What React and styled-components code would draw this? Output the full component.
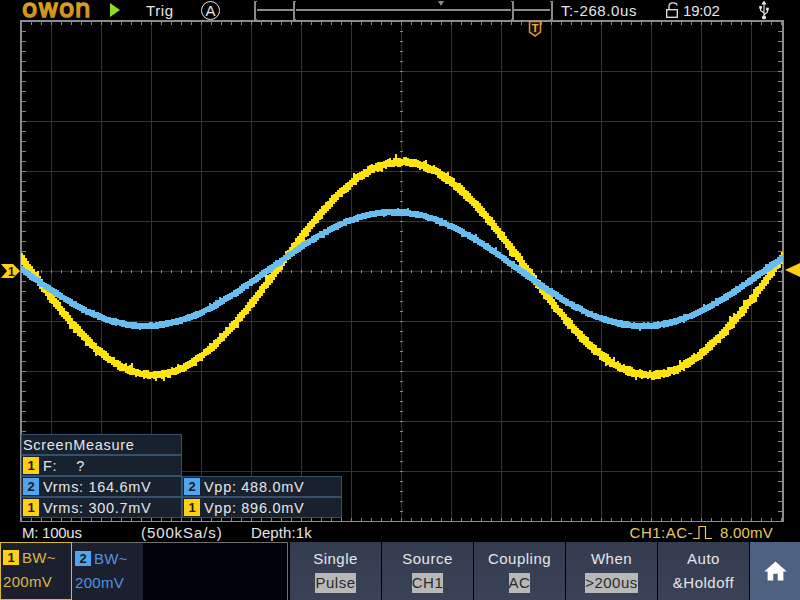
import React from 'react'
import styled, { createGlobalStyle } from 'styled-components'
import { MdHome } from 'react-icons/md'

const LEFT = 21
const RIGHT = 782
const TOP = 21
const BOTTOM = 521
const MID_X = 401
const MID_Y = 271
const PERIOD = 497

// small seeded random so the trace noise is the same on every load
const makeRandom = (seed) => () => {
  seed = (seed + 0x6d2b79f5) | 0
  let t = Math.imul(seed ^ (seed >>> 15), 1 | seed)
  t = (t + Math.imul(t ^ (t >>> 7), 61 | t)) ^ t
  return ((t ^ (t >>> 14)) >>> 0) / 4294967296
}

// one 2px column per sample, it gives the blocky look of the real screen
const tracePath = ({ center, amp, peak, width, noise, seed }) => {
  const rand = makeRandom(seed)
  const k = (2 * Math.PI) / PERIOD
  let d = ''
  for (let x = LEFT; x <= RIGHT; x += 2) {
    const y = center - amp * Math.cos(k * (x - peak))
    const slope = amp * k * Math.sin(k * (x - peak))
    const half = (width / 2) * Math.sqrt(1 + slope * slope)
    const up = rand() * noise * (rand() > 0.92 ? 2.6 : 1)
    const down = rand() * noise * (rand() > 0.92 ? 2.2 : 1)
    d += `M${x + 1} ${Math.round(y - half - up)}V${Math.round(y + half + down)}`
  }
  return d
}

const range = (from, to, step) => {
  const out = []
  for (let v = from; v <= to; v += step) out.push(v)
  return out
}

const yellowTrace = tracePath({ center: 268.5, amp: 106.5, peak: 401, width: 6, noise: 2, seed: 11 })
const blueTrace = tracePath({ center: 269, amp: 57, peak: 393, width: 5.5, noise: 1, seed: 29 })

const Grid = () => {
  const vLines = range(LEFT + 30, RIGHT - 1, 50)
  const hLines = range(TOP + 50, BOTTOM - 1, 50)
  const hTicks = range(LEFT, RIGHT, 10)
  const vTicks = range(TOP, BOTTOM, 10)
  return (
    <g shapeRendering="crispEdges">
      {vLines.map((x) => (
        <line key={x} x1={x + 0.5} x2={x + 0.5} y1={TOP} y2={BOTTOM} stroke="#333" />
      ))}
      {hLines.map((y) => (
        <line key={y} x1={LEFT} x2={RIGHT} y1={y + 0.5} y2={y + 0.5} stroke="#333" />
      ))}
      {hTicks.map((x) => (
        <g key={x} stroke="#8a8a8a">
          <line x1={x + 0.5} x2={x + 0.5} y1={TOP} y2={TOP + 4} />
          <line x1={x + 0.5} x2={x + 0.5} y1={BOTTOM - 3} y2={BOTTOM} />
          <line x1={x + 0.5} x2={x + 0.5} y1={MID_Y - 1} y2={MID_Y + 2} />
        </g>
      ))}
      {vTicks.map((y) => (
        <g key={y} stroke="#8a8a8a">
          <line x1={LEFT} x2={LEFT + 5} y1={y + 0.5} y2={y + 0.5} />
          <line x1={RIGHT - 4} x2={RIGHT} y1={y + 0.5} y2={y + 0.5} />
          <line x1={MID_X - 1} x2={MID_X + 2} y1={y + 0.5} y2={y + 0.5} />
        </g>
      ))}
      <rect x={LEFT - 0.5} y={TOP - 0.5} width={RIGHT - LEFT + 1} height={BOTTOM - TOP + 1} fill="none" stroke="#8c8c8c" strokeWidth="2" />
    </g>
  )
}

const Badge = ({ ch }) => <ChBadge $ch={ch}>{ch}</ChBadge>

const softKeys = [
  { title: 'Single', value: 'Pulse' },
  { title: 'Source', value: 'CH1' },
  { title: 'Coupling', value: 'AC' },
  { title: 'When', value: '>200us' },
  { title: 'Auto', plain: '&Holdoff' },
]

const App = () => {
  return (
    <Page>
      <Global />
      <TopBar>
        <Logo width="68" height="20" viewBox="0 0 68 20">
          <defs>
            <linearGradient id="logoGold" x1="0" x2="0" y1="0" y2="1">
              <stop offset="0" stopColor="#e8a928" />
              <stop offset="1" stopColor="#c98a14" />
            </linearGradient>
          </defs>
          <text x="1" y="17" fontFamily="DejaVu Sans" fontSize="25" fill="url(#logoGold)" stroke="url(#logoGold)" strokeWidth="1.5">owon</text>
        </Logo>
        <Play />
        <TopText $w="55px">Trig</TopText>
        <AutoMark>A</AutoMark>
        <TimeBar>
          <Bracket />
          <BarLine />
          <Bracket />
          <BarLine $grow="2">
            <BarPin />
          </BarLine>
          <Bracket $right />
          <BarLine />
          <Bracket $right />
        </TimeBar>
        <TopText $w="105px">T:-268.0us</TopText>
        <svg width="12" height="16" viewBox="0 0 12 16" fill="none" stroke="#e6e6e6" strokeWidth="1.3">
          <rect x="0.7" y="7.7" width="10.6" height="7.6" />
          <path d="M3 7.5V4C3 1.8 5 0.8 7 0.8S11 1.8 11 3.5" />
        </svg>
        <TopText $w="81px" $pad="5px" $ls="-0.2px">19:02</TopText>
        <svg width="10" height="19" viewBox="0 0 10 19" fill="none" stroke="#e6e6e6" strokeWidth="1.1">
          <path d="M5 2V17M5 12L1.5 9.5V7M5 14L8.5 11V8.5" />
          <path d="M5 0.5L6.6 3H3.4Z" fill="#e6e6e6" />
          <circle cx="5" cy="16.5" r="1.5" fill="#e6e6e6" />
          <rect x="0.8" y="5.6" width="1.6" height="1.6" fill="#e6e6e6" />
          <rect x="7.6" y="7.2" width="1.6" height="1.6" fill="#e6e6e6" />
        </svg>
      </TopBar>

      <Scope>
        <ScopeSvg viewBox="0 20 800 502">
          <Grid />
          <path d={yellowTrace} stroke="#ffe30f" strokeWidth="2" fill="none" shapeRendering="crispEdges" />
          <path d={blueTrace} stroke="#68bdf0" strokeWidth="2" fill="none" shapeRendering="crispEdges" />
          <polygon points="1,264 13,264 20,271 13,278 1,278 7,271" fill="#ffcf14" />
          <text x="8" y="276" fontFamily="Liberation Sans" fontSize="12" fontWeight="700" fill="#111">1</text>
          <polygon points="785,270 800,263 800,277" fill="#ffcf14" />
          <polygon points="529.5,21.5 540.5,21.5 540.5,32 535,36 529.5,32" fill="#1a1208" stroke="#e0962e" strokeWidth="1.5" />
          <text x="535" y="31.5" textAnchor="middle" fontFamily="Liberation Sans" fontSize="11" fontWeight="700" fill="#f0ac48">T</text>
        </ScopeSvg>

        <Measure>
          <MeasureCell $span>ScreenMeasure</MeasureCell>
          <MeasureCell $span><Badge ch="1" />F:&nbsp;&nbsp;&nbsp;&nbsp;?</MeasureCell>
          <MeasureCell><Badge ch="2" />Vrms: 164.6mV</MeasureCell>
          <MeasureCell><Badge ch="2" />Vpp: 488.0mV</MeasureCell>
          <MeasureCell><Badge ch="1" />Vrms: 300.7mV</MeasureCell>
          <MeasureCell><Badge ch="1" />Vpp: 896.0mV</MeasureCell>
        </Measure>
      </Scope>

      <StatusRow>
        <StatusText $w="119px" $ls="-0.25px">M: 100us</StatusText>
        <StatusText $w="110px" $ls="0.9px">(500kSa/s)</StatusText>
        <StatusText $ls="0.1px">Depth:1k</StatusText>
        <ChannelInfo>
          CH1:AC-
          <svg width="19" height="15" viewBox="0 0 19 15" fill="none" stroke="#e8c860" strokeWidth="1.2">
            <path d="M0 13.5H6V1.5H12.5V13.5H19" />
          </svg>
          <span>8.00mV</span>
        </ChannelInfo>
      </StatusRow>

      <SoftRow>
        <Channels>
          <ChannelTab $ch="1" $active>
            <TabTop><Badge ch="1" />BW~</TabTop>
            <span>200mV</span>
          </ChannelTab>
          <ChannelTab $ch="2">
            <TabTop><Badge ch="2" />BW~</TabTop>
            <span>200mV</span>
          </ChannelTab>
        </Channels>
        {softKeys.map((k) => (
          <SoftKey key={k.title}>
            <span>{k.title}</span>
            {k.value ? <SoftValue>{k.value}</SoftValue> : <SoftPlain>{k.plain}</SoftPlain>}
          </SoftKey>
        ))}
        <HomeKey><MdHome size={27} color="#fff" /></HomeKey>
      </SoftRow>
    </Page>
  )
}

const Global = createGlobalStyle`
  html, body { margin: 0; padding: 0; background: #000; }
  body { font-family: "Liberation Sans", Arial, sans-serif; }
`

const Page = styled.div`
  width: 800px;
  height: 600px;
  background: #000;
  display: flex;
  flex-direction: column;
  overflow: hidden;
  color: #e6e6e6;
`

const TopBar = styled.div`
  height: 20px;
  display: flex;
  align-items: center;
  font-size: 15px;
  letter-spacing: 0.6px;
`

const Logo = styled.svg`
  margin-left: 21px;
  flex: none;
  overflow: visible;
`

const Play = styled.div`
  width: 0;
  height: 0;
  margin-left: 21px;
  margin-right: 26px;
  border-left: 10px solid #8ee01e;
  border-top: 7px solid transparent;
  border-bottom: 7px solid transparent;
`

const TopText = styled.div`
  width: ${({ $w }) => $w};
  padding-left: ${({ $pad }) => $pad || 0};
  letter-spacing: ${({ $ls }) => $ls || 'inherit'};
  box-sizing: border-box;
  white-space: nowrap;
`

const AutoMark = styled.div`
  width: 17px;
  height: 17px;
  margin-right: 34px;
  border: 1px solid #e6e6e6;
  border-radius: 50%;
  font-size: 15px;
  letter-spacing: 0;
  line-height: 17px;
  text-align: center;
`

const TimeBar = styled.div`
  width: 299px;
  height: 20px;
  margin-right: 8px;
  display: flex;
  align-items: center;
`

const Bracket = styled.div`
  flex: none;
  width: 3px;
  height: 19px;
  box-sizing: border-box;
  border: 0 solid #8a8a8a;
  border-width: 1px 0;
  ${({ $right }) => ($right ? 'border-right-width: 2px;' : 'border-left-width: 2px;')}
`

const BarLine = styled.div`
  position: relative;
  flex: ${({ $grow }) => ($grow ? 216 : 36)} 1 0;
  height: 2px;
  background: #8a8a8a;
`

const BarPin = styled.div`
  position: absolute;
  left: 142px;
  top: -8px;
  width: 0;
  height: 0;
  border-top: 5px solid #8a8a8a;
  border-left: 3px solid transparent;
  border-right: 3px solid transparent;
`

const Scope = styled.div`
  position: relative;
  height: 502px;
`

const ScopeSvg = styled.svg`
  display: block;
  width: 800px;
  height: 502px;
`

const Measure = styled.div`
  position: absolute;
  left: 21px;
  top: 414px;
  display: grid;
  grid-template-columns: 161px 160px;
  grid-auto-rows: 21px;
  font-size: 14.5px;
  letter-spacing: 0.7px;
  color: #e6e6e6;
`

const MeasureCell = styled.div`
  ${({ $span }) => ($span ? 'width: 161px;' : '')}
  ${({ $span }) => ($span ? 'grid-column: 1 / -1;' : '')}
  box-sizing: border-box;
  display: flex;
  align-items: center;
  gap: 4px;
  padding-left: 1px;
  background: #18222f;
  border: 1px solid #33506f;
  white-space: pre;
`

const ChBadge = styled.span`
  flex: none;
  display: inline-block;
  width: 16px;
  height: 17px;
  line-height: 17px;
  text-align: center;
  font-size: 13px;
  font-weight: 700;
  letter-spacing: 0;
  color: #1a1a1a;
  background: ${({ $ch }) => ($ch === '1' ? '#ffcf14' : '#4ea6f2')};
`

const StatusRow = styled.div`
  height: 20px;
  display: flex;
  align-items: center;
  padding-left: 22px;
  font-size: 15px;
  letter-spacing: 0.5px;
`

const StatusText = styled.div`
  width: ${({ $w }) => $w || 'auto'};
  letter-spacing: ${({ $ls }) => $ls};
  white-space: nowrap;
`

const ChannelInfo = styled.div`
  margin-left: auto;
  margin-right: 27px;
  display: flex;
  align-items: center;
  color: #e8c860;
  span { margin-left: 8px; letter-spacing: 0.2px; }
`

const SoftRow = styled.div`
  height: 58px;
  display: flex;
  gap: 1px;
  background: #000;
`

const Channels = styled.div`
  width: 288px;
  margin-right: 1px;
  box-sizing: border-box;
  display: flex;
  align-items: stretch;
  background: #02030a;
  border: 1px solid #6e6e6e;
  border-width: 1px 1px 0 0;
`

const ChannelTab = styled.div`
  width: ${({ $active }) => ($active ? '72px' : '71px')};
  box-sizing: border-box;
  margin-top: ${({ $active }) => ($active ? '-1px' : '0')};
  padding: ${({ $active }) => ($active ? '6px 0 0 2px' : '7px 0 0 3px')};
  background: #1c1f2e;
  font-size: 15px;
  letter-spacing: 0.3px;
  color: ${({ $ch }) => ($ch === '1' ? '#dcb840' : '#4f94e0')};
  border: ${({ $active }) => ($active ? '1px solid #d9b93a' : '0')};
  display: flex;
  flex-direction: column;
  gap: 7px;
`

const TabTop = styled.div`
  display: flex;
  align-items: center;
  gap: 3px;
  ${ChBadge} { width: 16px; height: 15px; line-height: 15px; }
`

const SoftKey = styled.div`
  flex: none;
  width: 91px;
  padding-top: 8px;
  box-sizing: border-box;
  display: flex;
  flex-direction: column;
  align-items: center;
  gap: 5px;
  background: linear-gradient(#343c50, #3a4257);
  font-size: 15px;
  letter-spacing: 0.5px;
  color: #e6e6e6;
`

const SoftValue = styled.span`
  padding: 1px 0;
  margin-top: 1px;
  background: #b8b8b8;
  color: #2a2a2a;
  line-height: 18px;
`

const SoftPlain = styled.span`
  margin-top: 1px;
  line-height: 20px;
`

const HomeKey = styled.div`
  flex: 1;
  display: flex;
  align-items: center;
  justify-content: center;
  background: #4f6180;
`

export default App
